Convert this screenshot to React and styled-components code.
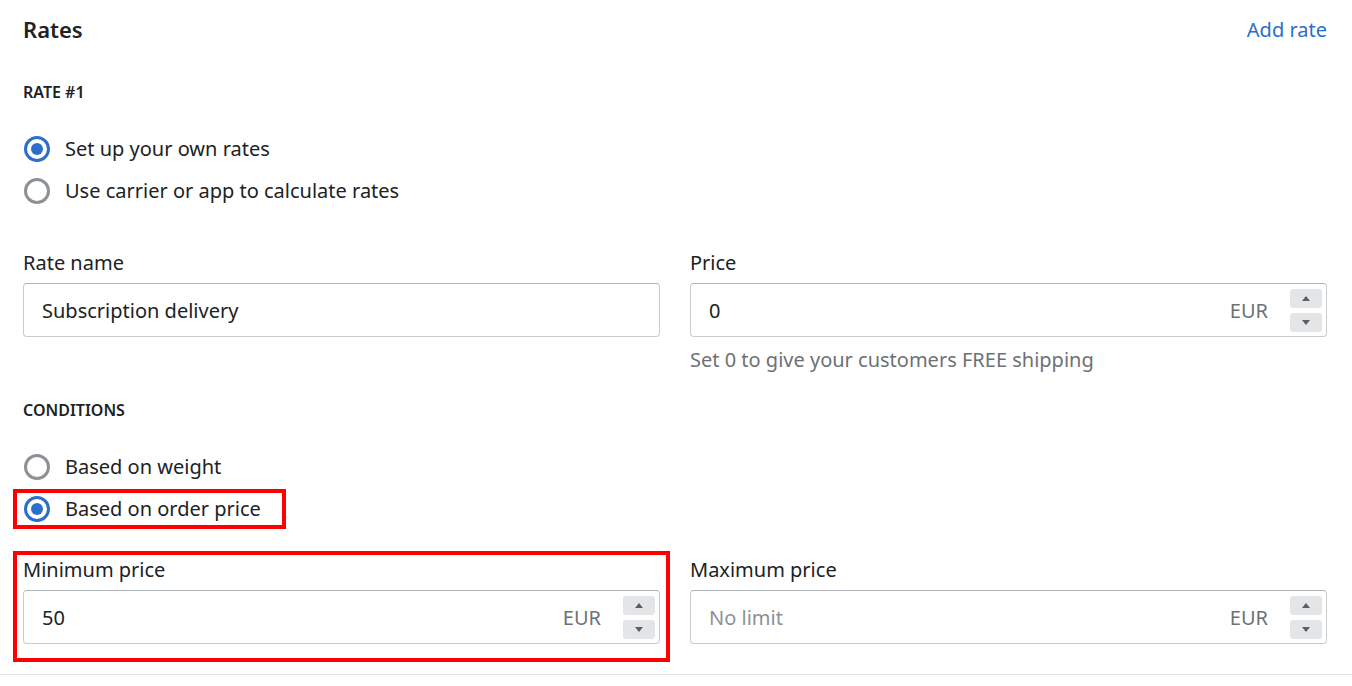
import styled, { createGlobalStyle } from "styled-components";

const GlobalStyle = createGlobalStyle`
  body {
    margin: 0;
    background: #fff;
    font-family: "Noto Sans", "Open Sans", sans-serif;
    color: #202223;
  }
`;

const Page = styled.div`
  width: 1352px;
  height: 686px;
  overflow: hidden;
`;

const Section = styled.div`
  border-bottom: 1px solid #e1e3e5;
  padding: 0 25px 30px 23px;
`;

const Header = styled.div`
  display: flex;
  justify-content: space-between;
  align-items: center;
  height: 58px;
`;

const Title = styled.h2`
  margin: 0;
  font-size: 22px;
  font-weight: 600;
`;

const Link = styled.a`
  color: #2c6ecb;
  font-size: 20px;
  text-decoration: none;
  cursor: pointer;
`;

const Subheading = styled.h3`
  margin: ${(p) => p.$top}px 0 0;
  font-size: 16px;
  font-weight: 600;
  text-transform: uppercase;
  line-height: 24px;
`;

const RadioList = styled.div`
  display: flex;
  flex-direction: column;
  gap: 16px;
  margin-top: ${(p) => p.$top}px;
`;

const RadioRow = styled.label`
  display: flex;
  align-items: center;
  gap: 15px;
  font-size: 20px;
  line-height: 26px;
  width: fit-content;
  padding: ${(p) => (p.$marked ? "3px 21px 3px 7px" : "0 0 0 1px")};
  margin: ${(p) => (p.$marked ? "-3px -21px -3px -6px" : "0")};
  outline: ${(p) => (p.$marked ? "4px solid #ff0000" : "none")};
`;

const RadioDot = styled.span`
  width: 26px;
  height: 26px;
  box-sizing: border-box;
  border-radius: 50%;
  border: ${(p) => (p.$checked ? "3px solid #2c6ecb" : "3px solid #8c9196")};
  display: flex;
  align-items: center;
  justify-content: center;
  &::after {
    content: "";
    width: 12px;
    height: 12px;
    border-radius: 50%;
    background: ${(p) => (p.$checked ? "#2c6ecb" : "transparent")};
  }
`;

const FieldGrid = styled.div`
  display: grid;
  grid-template-columns: 1fr 1fr;
  column-gap: 30px;
  margin-top: ${(p) => p.$top}px;
`;

const Field = styled.div`
  display: flex;
  flex-direction: column;
  padding: ${(p) => (p.$marked ? "2px 6px 14px 6px" : "0")};
  margin: ${(p) => (p.$marked ? "-2px -6px -14px -6px" : "0")};
  outline: ${(p) => (p.$marked ? "4px solid #ff0000" : "none")};
`;

const FieldLabel = styled.div`
  font-size: 20px;
  line-height: 26px;
  margin-bottom: 7px;
`;

const InputBox = styled.div`
  display: flex;
  align-items: center;
  height: 54px;
  box-sizing: border-box;
  border: 1px solid #c9cccf;
  border-top-color: #aeb4b9;
  border-radius: 4px;
  padding: 0 4px 0 18px;
  font-size: 20px;
`;

const Value = styled.span`
  flex: 1;
  color: ${(p) => (p.$placeholder ? "#8c9196" : "#202223")};
`;

const Suffix = styled.span`
  color: #6d7175;
  margin-right: 22px;
`;

const Spinner = styled.div`
  display: flex;
  flex-direction: column;
  gap: 5px;
`;

const SpinButton = styled.div`
  width: 32px;
  height: 19px;
  border-radius: 3px;
  background: #e4e5e7;
  display: flex;
  align-items: center;
  justify-content: center;
  &::after {
    content: "";
    border-left: 4px solid transparent;
    border-right: 4px solid transparent;
    ${(p) => (p.$up ? "border-bottom" : "border-top")}: 5px solid #5c5f62;
  }
`;

const Help = styled.div`
  margin-top: 10px;
  font-size: 20px;
  color: #6d7175;
  line-height: 26px;
`;

function Radio({ checked, marked, children }) {
  return (
    <RadioRow $marked={marked}>
      <RadioDot $checked={checked} />
      {children}
    </RadioRow>
  );
}

function NumberInput({ value, placeholder }) {
  return (
    <InputBox>
      <Value $placeholder={!value}>{value || placeholder}</Value>
      <Suffix>EUR</Suffix>
      <Spinner>
        <SpinButton $up />
        <SpinButton />
      </Spinner>
    </InputBox>
  );
}

export default function App() {
  return (
    <Page>
      <GlobalStyle />
      <Section>
        <Header>
          <Title>Rates</Title>
          <Link>Add rate</Link>
        </Header>
        <Subheading $top={22}>Rate #1</Subheading>
        <RadioList $top={32}>
          <Radio checked>Set up your own rates</Radio>
          <Radio>Use carrier or app to calculate rates</Radio>
        </RadioList>

        <FieldGrid $top={46}>
          <Field>
            <FieldLabel>Rate name</FieldLabel>
            <InputBox>
              <Value>Subscription delivery</Value>
            </InputBox>
          </Field>
          <Field>
            <FieldLabel>Price</FieldLabel>
            <NumberInput value="0" />
            <Help>Set 0 to give your customers FREE shipping</Help>
          </Field>
        </FieldGrid>

        <Subheading $top={25}>Conditions</Subheading>
        <RadioList $top={32}>
          <Radio>Based on weight</Radio>
          <Radio checked marked>
            Based on order price
          </Radio>
        </RadioList>

        <FieldGrid $top={35}>
          <Field $marked>
            <FieldLabel>Minimum price</FieldLabel>
            <NumberInput value="50" />
          </Field>
          <Field>
            <FieldLabel>Maximum price</FieldLabel>
            <NumberInput placeholder="No limit" />
          </Field>
        </FieldGrid>
      </Section>
    </Page>
  );
}
